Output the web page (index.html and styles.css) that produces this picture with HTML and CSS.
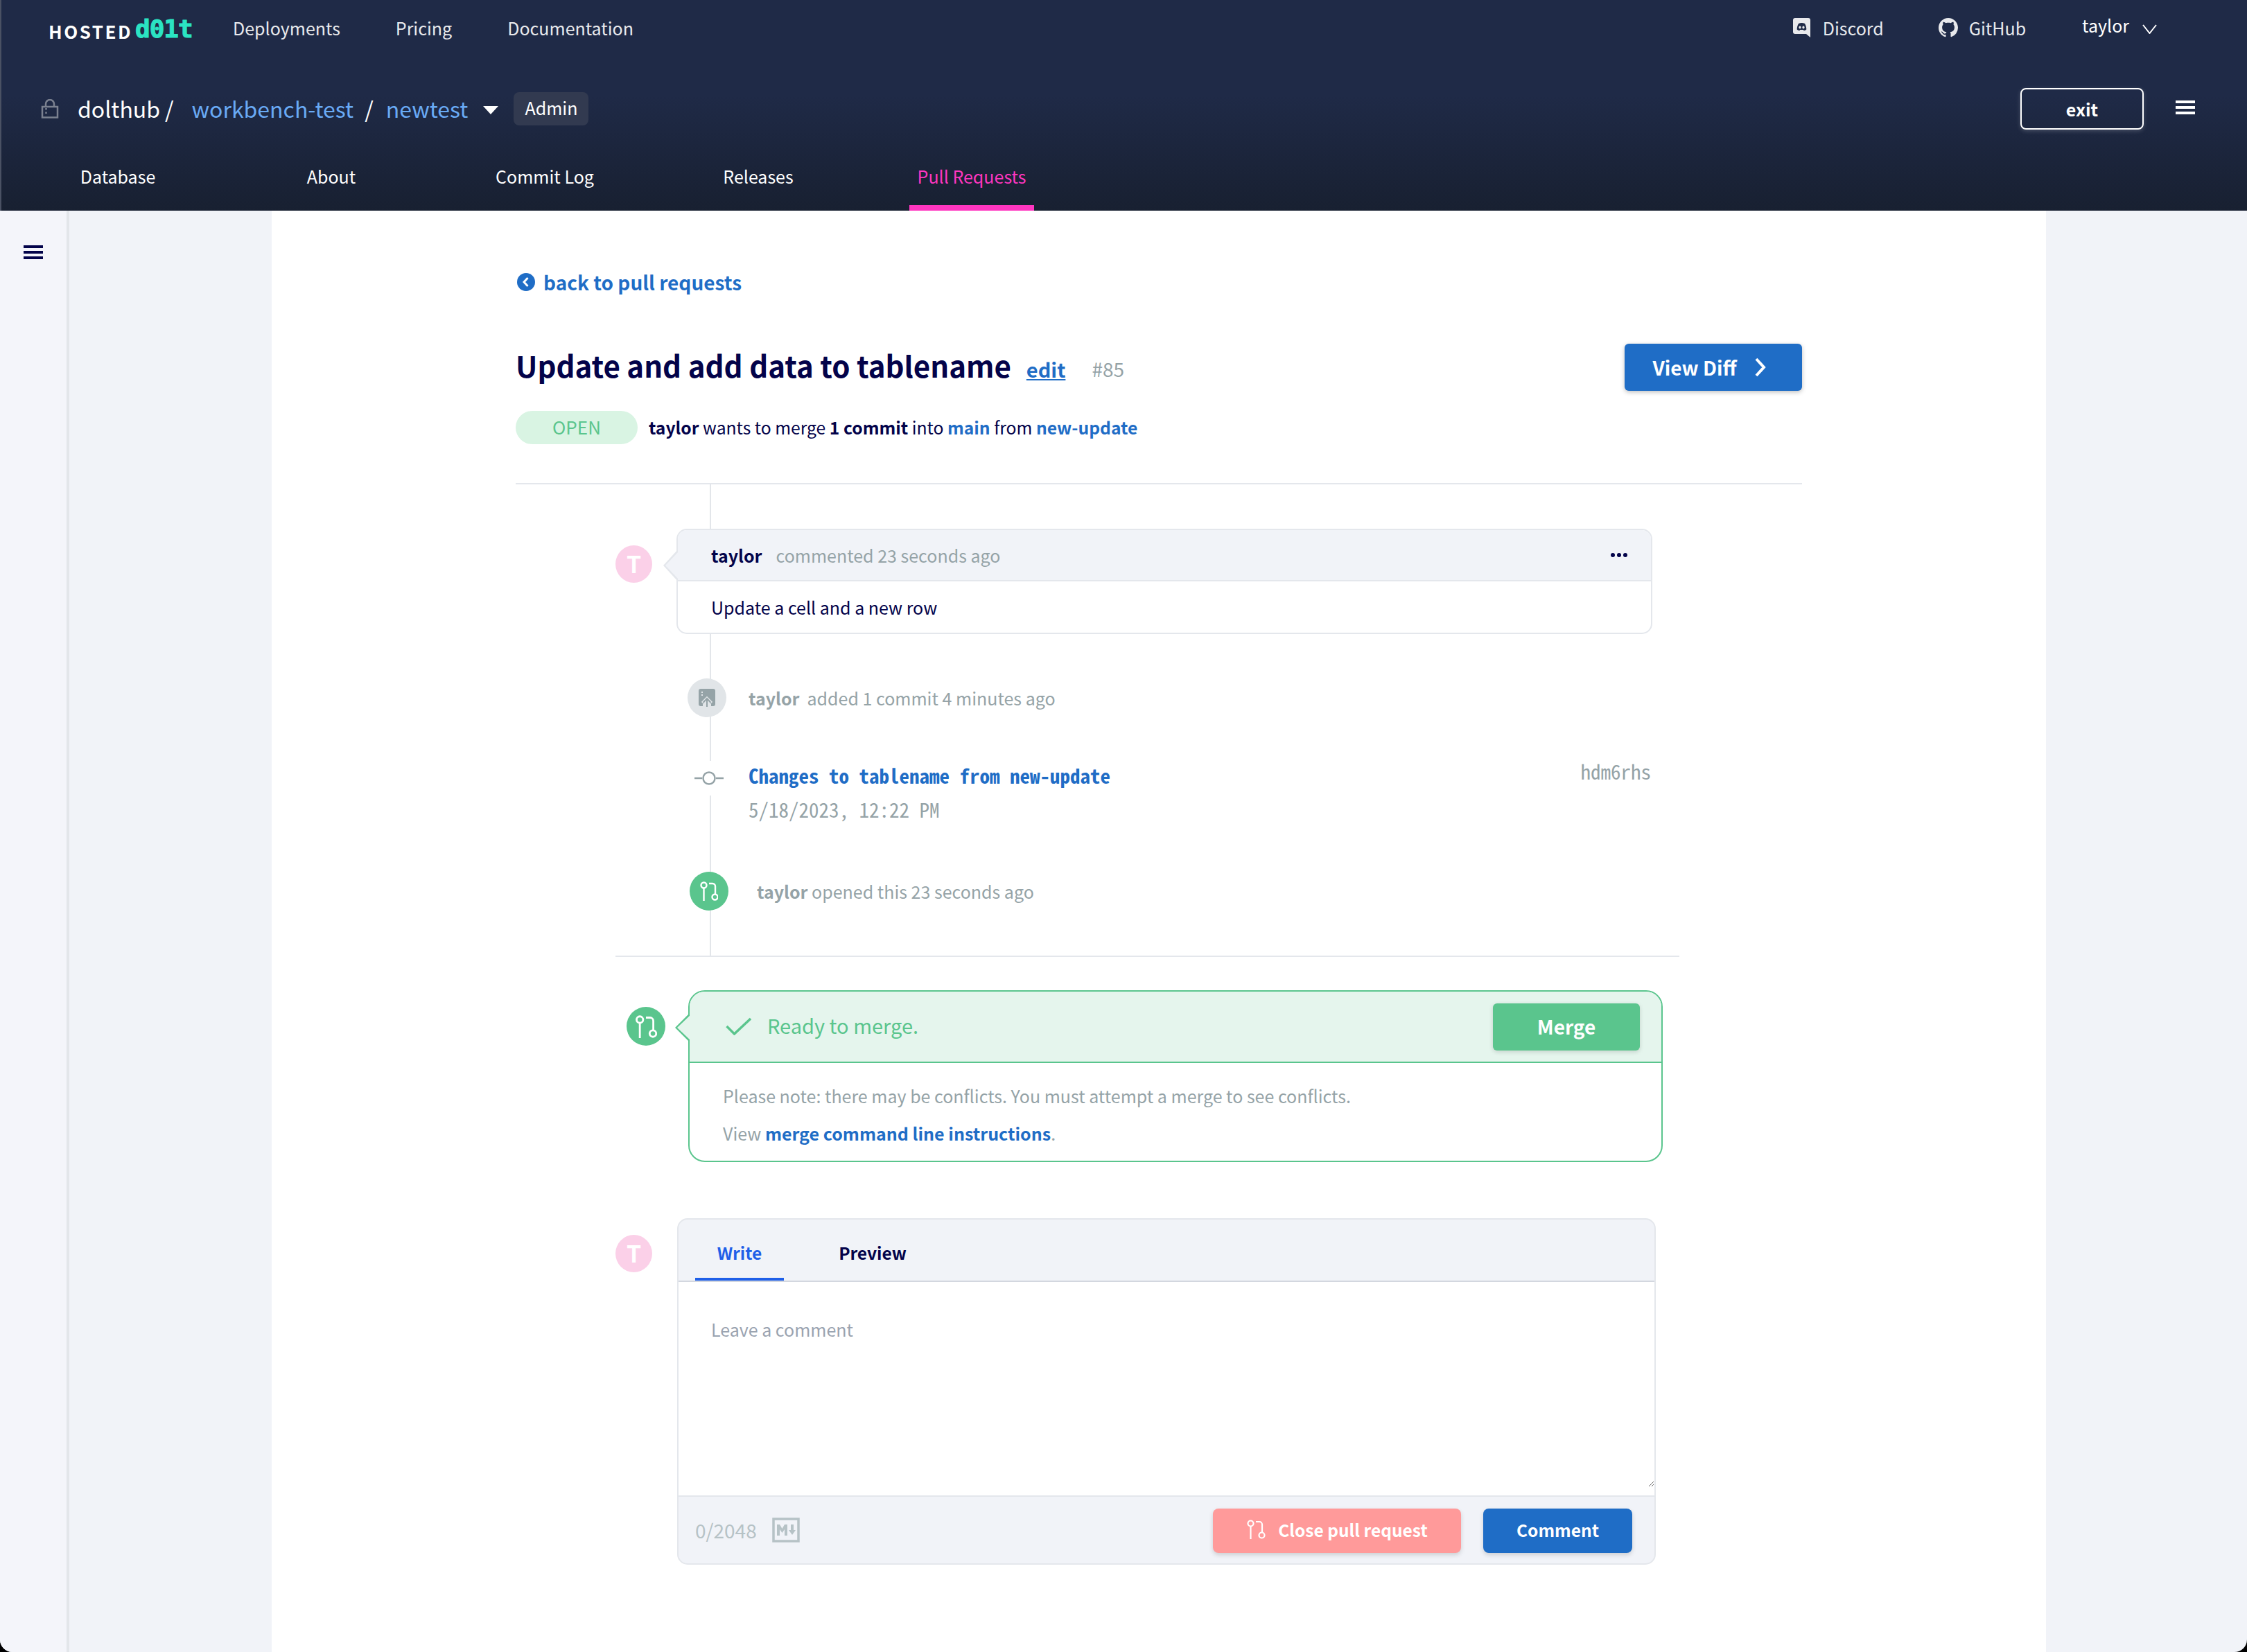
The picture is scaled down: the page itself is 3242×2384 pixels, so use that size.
FILE: index.html
```html
<!DOCTYPE html>
<html lang="en">
<head>
<meta charset="utf-8">
<title>Update and add data to tablename</title>
<link rel="stylesheet" href="styles.css">
</head>
<body>
<div class="app">
  <header class="top">
    <div class="row-nav">
      <div class="logo"><span class="logo-hosted">HOSTED</span><span class="logo-dolt">d01t</span></div>
      <nav class="nav-left">
        <a class="nav-a nav-dep">Deployments</a>
        <a class="nav-a nav-pri">Pricing</a>
        <a class="nav-a">Documentation</a>
      </nav>
      <div class="nav-right">
        <a class="nav-a nav-icon nav-discord">
          <svg class="i-discord" viewBox="0 0 25 28"><path fill="#e8e9ec" d="M3 0h19a3 3 0 0 1 3 3v25l-6-5H3a3 3 0 0 1-3-3V3a3 3 0 0 1 3-3z"/><path fill="#1f2a47" d="M8 8c3-1.300 6-1.300 9 0 1.500 2.500 2.300 5.500 2.300 8.500-1.200 1-2.500 1.500-3.600 1.700l-.8-1.300h-4.800l-.8 1.300c-1.100-.2-2.400-.7-3.600-1.700C5.700 13.500 6.500 10.500 8 8z"/><ellipse fill="#e8e9ec" cx="10" cy="13.500" rx="1.600" ry="1.900"/><ellipse fill="#e8e9ec" cx="15" cy="13.500" rx="1.600" ry="1.900"/></svg>
          Discord
        </a>
        <a class="nav-a nav-icon nav-github">
          <svg class="i-github" viewBox="0 0 16 16"><path fill="#e8e9ec" d="M8 0C3.580 0 0 3.580 0 8c0 3.540 2.290 6.530 5.470 7.590.4.070.55-.17.55-.38 0-.19-.01-.82-.01-1.490-2.010.37-2.530-.49-2.690-.94-.09-.23-.48-.94-.82-1.130-.28-.15-.68-.52-.01-.53.63-.01 1.080.58 1.230.82.72 1.210 1.870.87 2.330.66.070-.52.28-.87.51-1.070-1.780-.2-3.640-.89-3.640-3.950 0-.87.31-1.590.82-2.150-.08-.2-.36-1.020.08-2.120 0 0 .67-.21 2.200.82.64-.18 1.320-.27 2-.27.68 0 1.360.09 2 .27 1.530-1.040 2.200-.82 2.200-.82.44 1.100.16 1.920.08 2.120.51.56.82 1.270.82 2.150 0 3.070-1.870 3.750-3.650 3.950.29.25.54.73.54 1.480 0 1.070-.01 1.930-.01 2.200 0 .21.15.46.55.38A8.013 8.013 0 0 0 16 8c0-4.420-3.580-8-8-8z"/></svg>
          GitHub
        </a>
        <a class="nav-user">taylor
          <svg class="i-chev" viewBox="0 0 21 14"><path fill="none" stroke="#fff" stroke-width="2" d="M1 1l9.500 12L20 1"/></svg>
        </a>
      </div>
    </div>
    <div class="row-repo">
      <svg class="i-lock" viewBox="0 0 26 28"><path fill="none" stroke="#7b8190" stroke-width="2.500" d="M2 11h22v15.500H2zM7 11V7a6 6 0 0 1 12 0v4"/><path stroke="#7b8190" stroke-width="2.500" stroke-dasharray="2.500 3" d="M7.500 13v11"/></svg>
      <span class="repo-owner">dolthub</span><span class="repo-slash slash-a">/</span>
      <a class="repo-link">workbench-test</a><span class="repo-slash slash-b">/</span>
      <a class="repo-link">newtest</a>
      <svg class="i-caret" viewBox="0 0 22 12"><path fill="#fff" d="M0 0h22L11 12z"/></svg>
      <span class="admin">Admin</span>
      <button class="exit">exit</button>
      <span class="burger burger-light"><i></i><i></i><i></i></span>
    </div>
    <nav class="row-tabs">
      <a class="tab"><span>Database</span></a>
      <a class="tab"><span>About</span></a>
      <a class="tab"><span>Commit Log</span></a>
      <a class="tab"><span>Releases</span></a>
      <a class="tab tab-active"><span>Pull Requests</span></a>
    </nav>
  </header>

  <div class="page">
    <aside class="side"><span class="burger burger-dark"><i></i><i></i><i></i></span></aside>
    <div class="gutter"></div>
    <main class="main">
      <a class="back">
        <svg class="i-back" viewBox="0 0 26 26"><circle cx="13" cy="13" r="13" fill="#1f6dc6"/><path fill="none" stroke="#fff" stroke-width="3" d="M15.500 7l-5.500 6 5.500 6"/></svg>
        back to pull requests
      </a>
      <div class="title-row">
        <h1 class="title">Update and add data to tablename</h1>
        <a class="edit">edit</a>
        <span class="pr-num">#85</span>
        <button class="btn-diff">View Diff
          <svg class="i-right" viewBox="0 0 16 28"><path fill="none" stroke="#fff" stroke-width="4" d="M2 2l11 12L2 26"/></svg>
        </button>
      </div>
      <div class="state-row">
        <span class="pill">OPEN</span>
        <p class="state-text"><b>taylor</b> wants to merge <b>1 commit</b> into <a class="link">main</a> from <a class="link">new-update</a></p>
      </div>

      <section class="timeline">
        <div class="comment-row">
          <span class="avatar">T</span>
          <div class="card">
            <div class="card-head">
              <b class="who">taylor</b><span class="when">commented 23 seconds ago</span>
              <span class="dots"><i></i><i></i><i></i></span>
            </div>
            <div class="card-body">Update a cell and a new row</div>
          </div>
        </div>
        <div class="event ev-added">
          <span class="ev-badge badge-gray">
            <svg class="i-push" viewBox="0 0 24 26"><path fill="#95a3a7" d="M3 0h18a3 3 0 0 1 3 3v19a3 3 0 0 1-3 3h-3v-3h-12v3H3a3 3 0 0 1-3-3V3a3 3 0 0 1 3-3z"/><path fill="#e1e5e8" d="M4 4h2v2H4zM4 8h2v2H4z"/><path fill="none" stroke="#e1e5e8" stroke-width="6" d="M12 26V15M6 21l6-6 6 6"/><path fill="none" stroke="#95a3a7" stroke-width="2" d="M12 26V14M6.500 20l5.500-6 5.500 6"/></svg>
          </span>
          <p class="ev-text"><b>taylor</b><span class="ev-gap">added 1 commit 4 minutes ago</span></p>
        </div>
        <div class="event ev-commit">
          <span class="ev-commit-icon">
            <svg class="i-commit" viewBox="0 0 42 20"><path stroke="#95a3a7" stroke-width="2.500" d="M0 10h11M31 10h11"/><circle cx="21" cy="10" r="8.500" fill="#fff" stroke="#95a3a7" stroke-width="2.500"/></svg>
          </span>
          <div class="commit-main">
            <a class="commit-msg">Changes to tablename from new-update</a>
            <div class="commit-date">5/18/2023, 12:22 PM</div>
          </div>
          <span class="commit-hash">hdm6rhs</span>
        </div>
        <div class="event ev-opened">
          <span class="ev-badge badge-green">
            <svg class="i-pr" viewBox="0 0 26 28"><g fill="none" stroke="#fff" stroke-width="2.400"><circle cx="5.500" cy="5.500" r="4"/><path d="M5.500 9.500V28M13 3h5a4 4 0 0 1 4 4v11"/><circle cx="21.500" cy="22.500" r="4"/></g></svg>
          </span>
          <p class="ev-text ev-text-open"><b>taylor</b> opened this 23 seconds ago</p>
        </div>
      </section>

      <section class="merge-row">
        <span class="ev-badge badge-green merge-badge">
          <svg class="i-pr-lg" viewBox="0 0 26 28"><g fill="none" stroke="#fff" stroke-width="2.400"><circle cx="5.500" cy="5.500" r="4"/><path d="M5.500 9.500V28M13 3h5a4 4 0 0 1 4 4v11"/><circle cx="21.500" cy="22.500" r="4"/></g></svg>
        </span>
        <div class="merge-card">
          <div class="merge-head">
            <svg class="i-check" viewBox="0 0 38 26"><path fill="none" stroke="#5ac58d" stroke-width="3.500" d="M1.500 13l11 11L36 2"/></svg>
            <span class="ready">Ready to merge.</span>
            <button class="btn-merge">Merge</button>
          </div>
          <div class="merge-body">
            <p class="note">Please note: there may be conflicts. You must attempt a merge to see conflicts.</p>
            <p class="note note-b">View <a class="link">merge command line instructions</a>.</p>
          </div>
        </div>
      </section>

      <section class="write-row">
        <span class="avatar">T</span>
        <form class="editor">
          <div class="ed-tabs">
            <a class="ed-tab ed-tab-on">Write</a>
            <a class="ed-tab">Preview</a>
          </div>
          <div class="ed-wrap">
            <textarea class="ed-input" placeholder="Leave a comment"></textarea>
          </div>
          <div class="ed-foot">
            <span class="count">0/2048</span>
            <svg class="i-md" viewBox="0 0 40 36"><rect x="2" y="2" width="36" height="32" fill="none" stroke="#b6c2c6" stroke-width="3.500"/><path fill="#b6c2c6" d="M7 26V10h4l3.500 6 3.500-6h4v16h-4v-9l-3.500 5-3.500-5v9zM27 10h4v8h3l-5 7-5-7h3z"/></svg>
            <button type="button" class="btn-close">
              <svg class="i-pr-s" viewBox="0 0 26 28"><g fill="none" stroke="#fff" stroke-width="2.200"><circle cx="5.500" cy="5.500" r="4"/><path d="M5.500 9.500V28M13 3h5a4 4 0 0 1 4 4v11"/><circle cx="21.500" cy="22.500" r="4"/></g></svg>
              Close pull request
            </button>
            <button type="button" class="btn-comment">Comment</button>
          </div>
        </form>
      </section>
    </main>
    <div class="gutter-r"></div>
  </div>
</div>
</body>
</html>
```
FILE: styles.css
```css
* { box-sizing: border-box; }
html, body { margin: 0; height: 100%; background: #000; }
body {
  font-family: "Noto Sans CJK SC", "Noto Sans", sans-serif;
  font-size: 25px;
  color: #03034a;
}
p, h1 { margin: 0; }
a { cursor: pointer; }
button { font-family: inherit; cursor: pointer; }

.app {
  width: 3242px;
  height: 2384px;
  display: flex;
  flex-direction: column;
  overflow: hidden;
  border-radius: 0 0 18px 18px;
  background: #f1f3f8;
}

/* header */
.top {
  height: 304px;
  flex: none;
  background: linear-gradient(#1f2a47, #1f2a47 45%, #182031);
  border-left: 2px solid #4a5163;
  color: #fff;
}
.row-nav {
  height: 80px;
  display: flex;
  align-items: center;
  padding-left: 68px;
}
.logo { display: flex; align-items: flex-end; height: 30px; width: 266px; margin-top: 3px; }
.logo-hosted {
  font-weight: 700;
  font-size: 26px;
  line-height: 24px;
  letter-spacing: 2.500px;
  width: 125px;
}
.logo-dolt {
  font-family: "DejaVu Sans Mono", monospace;
  font-weight: 700;
  font-size: 36px;
  line-height: 30px;
  letter-spacing: -1px;
  color: #2be4c3;
  -webkit-text-stroke: 1px #2be4c3;
}
.nav-left { display: flex; align-items: center; }
.nav-a { font-size: 25px; line-height: 36px; color: #e8e9ec; }
.nav-dep { margin-right: 80px; }
.nav-pri { margin-right: 80px; }
.nav-right { margin-left: auto; display: flex; align-items: center; }
.nav-icon { display: flex; align-items: center; }
.i-discord { width: 25px; height: 28px; margin-right: 18px; }
.i-github { width: 28px; height: 28px; margin-right: 16px; }
.nav-discord { margin-right: 79px; }
.nav-github { margin-right: 81px; }
.nav-user { display: flex; align-items: center; font-size: 25px; line-height: 36px; color: #fff; margin-right: 130px; margin-top: -8px; }
.i-chev { width: 21px; height: 14px; margin-left: 19px; margin-top: 12px; }

.row-repo {
  height: 126px;
  padding: 28px 0 0 57px;
  display: flex;
  align-items: center;
  font-size: 32px;
}
.i-lock { width: 26px; height: 28px; margin-right: 27px; }
.repo-owner, .repo-slash, .repo-link { margin-top: -3px; }
.repo-owner { color: #fff; }
.repo-slash { color: #fff; }
.slash-a { margin-left: 7px; margin-right: 26px; }
.slash-b { margin-left: 16px; margin-right: 18px; }
.repo-link { color: #69aaf5; }
.i-caret { width: 22px; height: 12px; margin: 4px 22px 0 22px; }
.admin {
  height: 48px;
  padding: 0 16px;
  line-height: 45px;
  font-size: 25px;
  background: #323a50;
  border-radius: 8px;
}
.exit {
  margin-left: auto;
  width: 178px;
  height: 60px;
  background: transparent;
  color: #fff;
  border: 2px solid #fff;
  border-radius: 8px;
  font-size: 25px;
  font-weight: 700;
  box-shadow: 0 2px 6px rgba(255, 255, 255, .2);
}
.burger { display: flex; flex-direction: column; gap: 4px; width: 28px; }
.burger i { display: block; height: 4px; }
.burger-light { margin: -4px 75px 0 46px; }
.burger-light i { background: #fff; }
.burger-dark i { background: #03034a; }

.row-tabs {
  height: 98px;
  display: grid;
  grid-template-columns: repeat(5, 308px);
  padding-left: 14px;
}
.tab {
  display: flex;
  justify-content: center;
  color: #fff;
  font-size: 25px;
}
.tab span {
  height: 98px;
  padding: 30px 12px 0;
  line-height: 36px;
}
.tab-active { color: #ff36c0; }
.tab-active span { border-bottom: 8px solid #ff36c0; }

/* page */
.page { flex: 1; display: flex; min-height: 0; }
.side {
  width: 100px;
  flex: none;
  background: #f4f5fa;
  border-right: 4px solid #e3e6ea;
  padding: 50px 0 0 34px;
}
.gutter { width: 292px; flex: none; }
.gutter-r { flex: 1; }
.main {
  width: 2560px;
  flex: none;
  background: #fff;
  padding: 83px 352px 0;
}
.back {
  display: flex;
  align-items: center;
  height: 40px;
  font-size: 28px;
  font-weight: 700;
  color: #1f6dc6;
}
.i-back { width: 26px; height: 26px; margin: 0 12px 0 2px; }
.title-row {
  display: flex;
  align-items: center;
  height: 68px;
  margin-top: 69px;
}
.title { font-size: 42px; font-weight: 700; line-height: 68px; color: #03034a; margin-top: -6px; }
.edit {
  margin: 4px 0 0 22px;
  font-size: 29px;
  font-weight: 700;
  color: #1f6dc6;
  text-decoration: underline;
}
.pr-num { margin: 4px 0 0 38px; font-size: 28px; color: #95a3a7; }
.btn-diff {
  margin-left: auto;
  width: 256px;
  height: 68px;
  padding: 0 12px 0 0;
  display: flex;
  align-items: center;
  justify-content: center;
  gap: 26px;
  background: #1f6dc6;
  color: #fff;
  border: 0;
  border-radius: 6px;
  font-size: 28px;
  font-weight: 700;
  box-shadow: 0 2px 6px rgba(0, 0, 0, .25);
}
.i-right { width: 16px; height: 28px; }
.state-row { display: flex; align-items: center; margin-top: 29px; height: 48px; }
.pill {
  width: 176px;
  height: 48px;
  border-radius: 24px;
  background: #d9f4e3;
  color: #5ac58d;
  font-size: 26px;
  line-height: 46px;
  text-align: center;
}
.state-text { margin: -2px 0 0 16px; font-size: 24.700px; line-height: 40px; }
.link { color: #1f6dc6; font-weight: 700; }

/* timeline */
.timeline {
  position: relative;
  margin: 56px 0 0 0;
  height: 684px;
  border-top: 2px solid #e4e7ec;
  padding-top: 64px;
}
.timeline::before {
  content: "";
  position: absolute;
  top: 0;
  bottom: 0;
  left: 280px;
  width: 2px;
  background: #e3e6ea;
}
.timeline::after {
  content: "";
  position: absolute;
  left: 144px;
  width: 1535px;
  bottom: 0;
  height: 2px;
  background: #e4e7ec;
}
.comment-row { position: relative; display: flex; align-items: flex-start; margin-left: 144px; }
.avatar {
  width: 53px;
  height: 54px;
  flex: none;
  border-radius: 50%;
  background: #fbd0e8;
  color: #fff;
  font-weight: 700;
  font-size: 34px;
  line-height: 52px;
  text-align: center;
  margin-top: 24px;
}
.card {
  position: relative;
  width: 1408px;
  height: 152px;
  margin-left: 35px;
  background: #fff;
  border: 2px solid #e4e7ec;
  border-radius: 15px;
}
.card-head {
  display: flex;
  align-items: center;
  height: 74px;
  padding-left: 48px;
  background: #f1f3f8;
  border-bottom: 2px solid #e4e7ec;
  border-radius: 13px 13px 0 0;
}
.card::before {
  content: "";
  position: absolute;
  left: -21px;
  top: 28px;
  width: 21px;
  height: 46px;
  background: #e4e7ec;
  clip-path: polygon(100% 0, 0 50%, 100% 100%);
}
.card::after {
  content: "";
  position: absolute;
  left: -18px;
  top: 30px;
  width: 20px;
  height: 42px;
  background: #f1f3f8;
  clip-path: polygon(100% 0, 0 50%, 100% 100%);
}
.who { font-size: 25px; font-weight: 700; }
.when { margin-left: 20px; font-size: 25px; color: #95a3a7; }
.dots { margin-left: auto; margin-right: 34px; display: flex; gap: 3px; }
.dots i { width: 6px; height: 6px; border-radius: 50%; background: #03034a; }
.card-body { padding: 0 48px; line-height: 74px; font-size: 25px; }

.event { position: relative; display: flex; }
.ev-badge {
  flex: none;
  display: flex;
  align-items: center;
  justify-content: center;
  border-radius: 50%;
  width: 56px;
  height: 56px;
}
.badge-gray { background: #e1e5e8; }
.badge-green { background: #5ac58d; }
.i-push { width: 24px; height: 26px; }
.i-pr { width: 26px; height: 28px; }
.i-pr-lg { width: 32px; height: 33px; }
.ev-added { margin: 64px 0 0 248px; align-items: center; }
.ev-text { font-size: 25px; color: #95a3a7; line-height: 40px; }
.ev-added .ev-text { margin-left: 32px; }
.ev-gap { margin-left: 11px; }
.ev-commit { margin: 63px 0 0 258px; width: 1380px; }
.ev-commit-icon {
  flex: none;
  width: 42px;
  height: 50px;
  display: flex;
  align-items: center;
  background: #fff;
}
.i-commit { width: 42px; height: 20px; }
.commit-main { margin: -3px 0 0 36px; font-family: "Noto Sans Mono CJK SC", "DejaVu Sans Mono", monospace; font-size: 29px; }
.commit-msg { display: block; line-height: 46px; color: #1f6dc6; font-weight: 700; }
.commit-date { line-height: 53px; color: #95a3a7; }
.commit-hash {
  margin: -4px 0 0 auto;
  font-family: "Noto Sans Mono CJK SC", "DejaVu Sans Mono", monospace;
  font-size: 29px;
  line-height: 36px;
  color: #95a3a7;
}
.ev-opened { margin: 64px 0 0 251px; align-items: center; }
.ev-text-open { margin-left: 41px; }

/* merge */
.merge-row { position: relative; display: flex; margin: 48px 0 0 160px; align-items: flex-start; }
.merge-badge { margin-top: 24px; }
.merge-card {
  position: relative;
  width: 1406px;
  height: 248px;
  margin-left: 33px;
  border: 2px solid #5ac58d;
  border-radius: 24px;
}
.merge-card::before {
  content: "";
  position: absolute;
  left: -21px;
  top: 31px;
  width: 21px;
  height: 42px;
  background: #5ac58d;
  clip-path: polygon(100% 0, 0 50%, 100% 100%);
}
.merge-card::after {
  content: "";
  position: absolute;
  left: -18px;
  top: 33px;
  width: 20px;
  height: 38px;
  background: #e5f5ed;
  clip-path: polygon(100% 0, 0 50%, 100% 100%);
}
.merge-head {
  height: 103px;
  display: flex;
  align-items: center;
  padding-left: 52px;
  background: #e5f5ed;
  border-bottom: 2px solid #5ac58d;
  border-radius: 22px 22px 0 0;
}
.i-check { width: 38px; height: 26px; margin-top: -2px; }
.ready { margin: -6px 0 0 22px; font-size: 29px; color: #5ac58d; }
.btn-merge {
  margin-left: auto;
  margin-right: 31px;
  width: 212px;
  height: 68px;
  padding-bottom: 3px;
  background: #5ac58d;
  color: #fff;
  border: 0;
  border-radius: 6px;
  font-size: 28px;
  font-weight: 700;
  box-shadow: 0 2px 6px rgba(0, 0, 0, .15);
}
.merge-body { padding: 27px 48px 0; }
.note { font-size: 25px; line-height: 40px; color: #95a3a7; }
.note-b { margin-top: 14px; }

/* editor */
.write-row { display: flex; align-items: flex-start; margin: 81px 0 0 144px; }
.editor {
  width: 1412px;
  height: 500px;
  margin-left: 36px;
  flex: none;
  display: flex;
  flex-direction: column;
  border: 2px solid #e4e7ec;
  border-radius: 15px;
  background: #f1f3f8;
  overflow: hidden;
}
.ed-tabs {
  height: 90px;
  flex: none;
  display: flex;
  padding-left: 24px;
  border-bottom: 2px solid #d3d7df;
}
.ed-tab {
  width: 128px;
  height: 88px;
  margin-right: 64px;
  text-align: center;
  font-size: 24.500px;
  font-weight: 700;
  line-height: 96px;
  color: #03034a;
}
.ed-tab-on { color: #1f5fe8; border-bottom: 4px solid #1f5fe8; }
.ed-wrap { flex: 1; background: #fff; }
.ed-input {
  display: block;
  width: 100%;
  height: 296px;
  border: 0;
  outline: 0;
  padding: 48px 47px 0;
  background: #fff;
  font-family: inherit;
  font-size: 25px;
  line-height: 40px;
  resize: vertical;
  color: #03034a;
}
.ed-input::placeholder { color: #9aa3b0; }
.ed-foot {
  height: 98px;
  flex: none;
  display: flex;
  align-items: center;
  padding: 2px 32px 0 24px;
  border-top: 2px solid #e4e7ec;
}
.count { font-size: 28px; color: #b6c2c6; margin-top: -2px; }
.i-md { width: 40px; height: 36px; margin: -2px 0 0 22px; }
.btn-close, .btn-comment {
  height: 64px;
  padding-bottom: 5px;
  border: 0;
  border-radius: 8px;
  color: #fff;
  font-size: 24.500px;
  font-weight: 700;
  box-shadow: 0 3px 6px rgba(0, 0, 0, .15);
  display: flex;
  align-items: center;
  justify-content: center;
}
.btn-close { margin-left: auto; width: 358px; background: #ff9a9a; gap: 18px; }
.i-pr-s { width: 28px; height: 28px; }
.btn-comment { margin-left: 32px; width: 215px; background: #1f6dc6; }
```
